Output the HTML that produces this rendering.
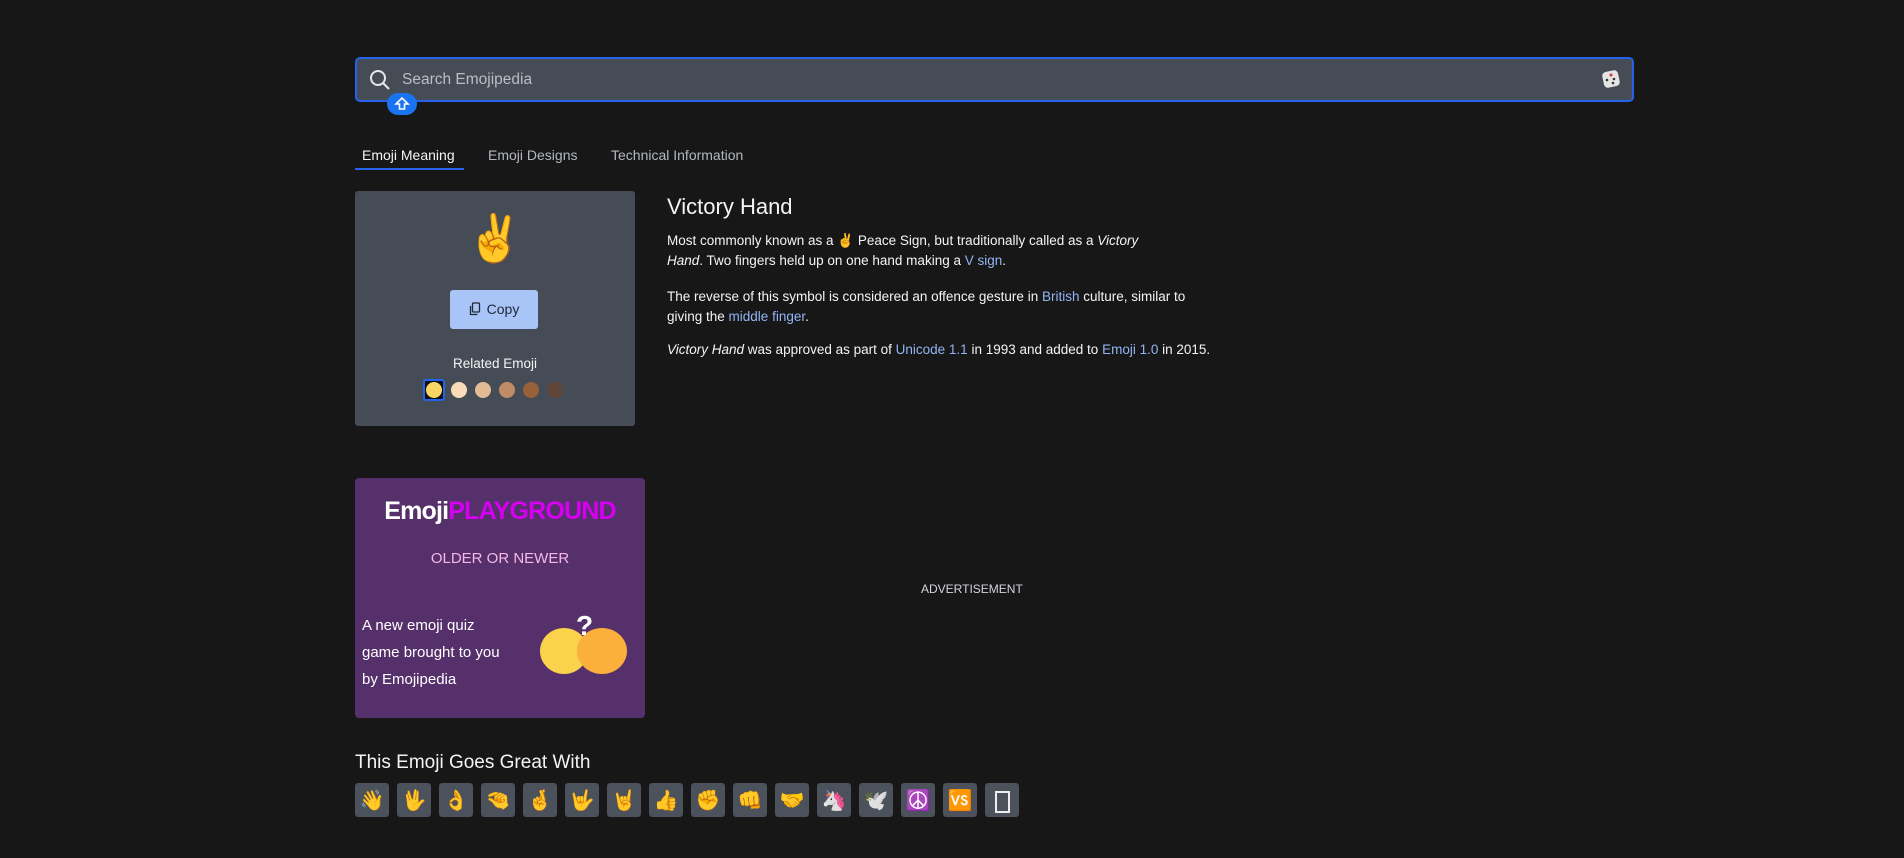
<!DOCTYPE html>
<html><head><meta charset="utf-8"><style>
*{box-sizing:border-box;margin:0;padding:0}
body{width:1904px;height:858px;background:#171717;font-family:"Liberation Sans",sans-serif;color:#e5e7eb;position:relative;overflow:hidden}
.abs{position:absolute}
.search{left:355px;top:57px;width:1279px;height:45px;background:#464c55;border:2px solid #2563eb;border-radius:5px}
.search .ph{position:absolute;left:45px;top:12px;font-size:15.5px;color:#b9bec6}
.shift{left:387px;top:93px;width:30px;height:22px;border-radius:11px;background:#1a73f0}
.tab{top:147px;font-size:14px;color:#b3b8c0}
.card{left:355px;top:191px;width:280px;height:235px;background:#464c55;border-radius:3px}
.copy{left:450px;top:290px;width:88px;height:39px;background:#a9c5f7;border-radius:3px;color:#1f2937;font-size:14px;line-height:39px;text-align:center}
.dot{top:382px;width:16px;height:16px;border-radius:50%}
p.t{position:absolute;left:667px;font-size:13.5px;line-height:20px;color:#f3f4f6;width:580px}
a{color:#93b4f5;text-decoration:none}
.play{left:355px;top:478px;width:290px;height:240px;background:#55306b;border-radius:4px}
.tile{top:783px;width:34px;height:34px;background:#4b525c;border-radius:3px;font-size:20px;text-align:center;line-height:34px;font-family:"Noto Color Emoji","Liberation Sans",sans-serif}
</style></head><body>
<div class="abs search"><svg class="abs" style="left:12px;top:10px" width="22" height="22" viewBox="0 0 22 22" fill="none" stroke="#e5e7eb" stroke-width="2"><circle cx="9" cy="9" r="7"/><path d="M14 14l6 6"/></svg><span class="ph">Search Emojipedia</span>
<svg class="abs" style="right:12px;top:11px" width="18" height="18" viewBox="0 0 18 18"><rect x="1" y="1" width="16" height="16" rx="4" fill="#e5e5e5" transform="rotate(-12 9 9)"/><circle cx="9" cy="5" r="1.5" fill="#d33"/><circle cx="5" cy="10" r="1.3" fill="#333"/><circle cx="12" cy="9" r="1.3" fill="#333"/><circle cx="11" cy="13" r="1.3" fill="#333"/></svg></div>
<div class="abs shift"><svg width="30" height="22" viewBox="0 0 30 22"><path d="M15 5l-6 6h3.5v5h5v-5H21z" fill="none" stroke="#fff" stroke-width="1.6"/></svg></div>
<div class="abs tab" style="left:362px;color:#f3f4f6">Emoji Meaning</div>
<div class="abs tab" style="left:488px">Emoji Designs</div>
<div class="abs tab" style="left:611px">Technical Information</div>
<div class="abs" style="left:355px;top:168px;width:109px;height:2px;background:#2563eb"></div>
<div class="abs card"></div>
<div class="abs" style="left:466px;top:208px;font-size:46px;line-height:60px">✌️</div>
<div class="abs copy"><svg style="vertical-align:-2px;margin-right:6px" width="12" height="14" viewBox="0 0 12 14" fill="none" stroke="#1f2937" stroke-width="1.3"><rect x="3.5" y="1" width="7" height="9" rx="1"/><path d="M1.5 4v8.5h7"/></svg>Copy</div>
<div class="abs" style="left:355px;width:280px;top:356px;text-align:center;font-size:13.5px;color:#f3f4f6">Related Emoji</div>
<div class="abs" style="left:423px;top:379px;width:22px;height:22px;border:2px solid #2563eb;border-radius:3px;background:#111"></div>
<div class="abs dot" style="left:426px;background:#fcd664"></div>
<div class="abs dot" style="left:451px;background:#f8dcb9"></div>
<div class="abs dot" style="left:475px;background:#e2bb93"></div>
<div class="abs dot" style="left:499px;background:#c08c65"></div>
<div class="abs dot" style="left:523px;background:#98613a"></div>
<div class="abs dot" style="left:547px;background:#5f4638"></div>
<div class="abs" style="left:667px;top:194px;font-size:22px;color:#f3f4f6">Victory Hand</div>
<p class="t" style="top:231px;width:510px">Most commonly known as a ✌️ Peace Sign, but traditionally called as a <i>Victory Hand</i>. Two fingers held up on one hand making a <a>V sign</a>.</p>
<p class="t" style="top:287px;width:575px">The reverse of this symbol is considered an offence gesture in <a>British</a> culture, similar to<br>giving the <a>middle finger</a>.</p>
<p class="t" style="top:340px;width:700px"><i>Victory Hand</i> was approved as part of <a>Unicode 1.1</a> in 1993 and added to <a>Emoji 1.0</a> in 2015.</p>
<div class="abs play"></div>
<div class="abs" style="left:355px;width:290px;top:497px;text-align:center;font-size:25px;font-weight:bold;color:#fff;letter-spacing:-0.8px">Emoji<span style="color:#d600f0">PLAYGROUND</span></div>
<div class="abs" style="left:355px;width:290px;top:550px;text-align:center;font-size:15px;color:#f5b8e8">OLDER OR NEWER</div>
<div class="abs" style="left:362px;top:612px;font-size:15px;line-height:27px;color:#fff;width:160px">A new emoji quiz<br>game brought to you<br>by Emojipedia</div>
<div class="abs" style="left:540px;top:628px;width:48px;height:46px;border-radius:50%;background:#fbd24c"></div>
<div class="abs" style="left:577px;top:628px;width:50px;height:46px;border-radius:50%;background:#fbb03b"></div>
<div class="abs" style="left:576px;top:610px;font-size:28px;font-weight:bold;color:#fff">?</div>
<div class="abs" style="left:921px;top:582px;font-size:12px;color:#d1d5db">ADVERTISEMENT</div>
<div class="abs" style="left:355px;top:752px;font-size:19px;color:#f3f4f6">This Emoji Goes Great With</div>
<div class="abs tile" style="left:355px">👋</div>
<div class="abs tile" style="left:397px">🖖</div>
<div class="abs tile" style="left:439px">👌</div>
<div class="abs tile" style="left:481px">🤏</div>
<div class="abs tile" style="left:523px">🤞</div>
<div class="abs tile" style="left:565px">🤟</div>
<div class="abs tile" style="left:607px">🤘</div>
<div class="abs tile" style="left:649px">👍</div>
<div class="abs tile" style="left:691px">✊</div>
<div class="abs tile" style="left:733px">👊</div>
<div class="abs tile" style="left:775px">🤝</div>
<div class="abs tile" style="left:817px">🦄</div>
<div class="abs tile" style="left:859px">🕊</div>
<div class="abs tile" style="left:901px">☮️</div>
<div class="abs tile" style="left:943px">🆚</div>
<div class="abs tile" style="left:985px"><span style="display:inline-block;width:15px;height:22px;border:2px solid #eee;vertical-align:middle"></span></div>
</body></html>
